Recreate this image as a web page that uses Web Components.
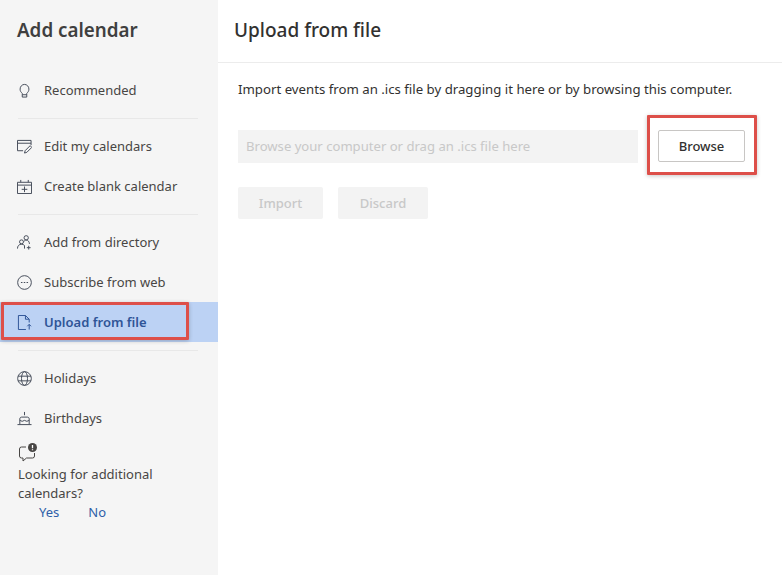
<!DOCTYPE html>
<html lang="en">
<head>
<meta charset="utf-8">
<title>Add calendar</title>
<style>
  html, body { margin: 0; height: 100%; background: #fff; }
  body { font-family: "Noto Sans", "Open Sans", sans-serif; color: #323130; overflow: hidden; }
</style>
</head>
<body>
<cal-dialog>
  <cal-sidebar slot="side" heading="Add calendar">
    <cal-nav-item icon="bulb">Recommended</cal-nav-item>
    <cal-rule></cal-rule>
    <cal-nav-item icon="edit">Edit my calendars</cal-nav-item>
    <cal-nav-item icon="plus">Create blank calendar</cal-nav-item>
    <cal-rule></cal-rule>
    <cal-nav-item icon="people">Add from directory</cal-nav-item>
    <cal-nav-item icon="web">Subscribe from web</cal-nav-item>
    <cal-nav-item icon="file" selected>Upload from file</cal-nav-item>
    <cal-rule></cal-rule>
    <cal-nav-item icon="globe">Holidays</cal-nav-item>
    <cal-nav-item icon="cake">Birthdays</cal-nav-item>
    <cal-feedback></cal-feedback>
  </cal-sidebar>
  <cal-upload-panel heading="Upload from file"></cal-upload-panel>
</cal-dialog>

<script>
// stroke icons on a 16 box, drawn to follow the reference
const ICONS = {
  bulb: '<path d="M5.600 11C4.200 9.900 3.300 8.500 3.300 6.500 3.300 3.700 5.400 1.500 8 1.500s4.700 2.200 4.700 5c0 2-.9 3.400-2.300 4.500v4H5.600z"/><path d="M5.700 12.500h4.600"/>',
  edit: '<path d="M.5 12.500V1.500h14.500v5M.5 4.500h14.500M.5 12.500h6"/><path d="M8 15l.7-2.600 5.300-5.300 1.800 1.800-5.300 5.300z"/>',
  plus: '<path d="M.5 3.500h15v12H.5zM.5 6.500h15M4 1v2.500M12 1v2.500M8 8v6M5 11h6"/>',
  people: '<circle cx="9.800" cy="3" r="2.300"/><circle cx="4.800" cy="7.300" r="2.100"/><path d="M.5 14.500c0-2.800 1.700-4.700 4.300-4.700 1.300 0 2.400.5 3.200 1.400v3.300M7.300 7c.5-1 1.300-1.600 2.500-1.600 2 0 3.300 1.700 3.500 4.100M12.500 11.500v4M10.500 13.500h4"/>',
  web: '<circle cx="8" cy="8" r="7.300"/><path d="M4.200 8h1.600M7.200 8h1.600M10.200 8h1.600" stroke-width="1.300"/>',
  file: '<path d="M1.500.5h7.500l4 4v3.500M9 .5v4h4M1.500.5v15h8"/><path d="M13 15.500V10M11 12l2-2 2 2"/>',
  globe: '<circle cx="8" cy="8" r="7.300"/><ellipse cx="8" cy="8" rx="3.200" ry="7.300"/><path d="M1.200 5.500h13.600M1.200 10.500h13.600"/>',
  cake: '<path d="M8 1v3.500M3 14V8.500C3 7 4 6.500 5 6.500h6c1 0 2 .5 2 2V14M.5 14.500h15M3 10l2.500 1L8 10l2.500 1 2.500-1"/>'
};

class CalDialog extends HTMLElement {
  constructor() {
    super();
    this.attachShadow({ mode: 'open' });
    this.shadowRoot.innerHTML = `
      <style>
        :host { display: flex; width: 100%; height: 100vh; }
      </style>
      <slot name="side"></slot>
      <slot></slot>`;
  }
}

class CalSidebar extends HTMLElement {
  constructor() {
    super();
    this.attachShadow({ mode: 'open' });
    this.shadowRoot.innerHTML = `
      <style>
        :host { display: block; flex: 0 0 218px; background: #f5f5f5; box-sizing: border-box; }
        h1 { margin: 0; padding: 15px 0 0 17px; height: 70px; box-sizing: border-box;
             font-size: 18.8px; line-height: 30px; font-weight: 600; color: #3f3f3f; }
      </style>
      <h1></h1>
      <slot></slot>`;
    this.shadowRoot.querySelector('h1').textContent = this.getAttribute('heading');
  }
}

class CalNavItem extends HTMLElement {
  constructor() {
    super();
    this.attachShadow({ mode: 'open' });
    const name = this.getAttribute('icon');
    this.shadowRoot.innerHTML = `
      <style>
        :host { display: flex; align-items: center; height: 40px; position: relative; box-sizing: border-box;
                padding-left: 17px; gap: 12px; font-size: 13px; color: #484644; }
        svg { width: 15px; height: 15px; flex: none; fill: none; stroke: #454c5a; stroke-width: 1.05; }
        :host([selected]) { background: #bcd2f4; color: #2f5597; font-weight: 600; }
        :host([selected]) svg { stroke: #2f5597; }
        :host([selected])::after { content: ""; position: absolute; left: 1px; top: 0; width: 188px; height: 38px;
                box-sizing: border-box; border: 3px solid #dd4f49; border-radius: 1px; box-shadow: 0 1px 4px rgba(0,0,0,.22); }
      </style>
      <svg viewBox="0 0 16 16" aria-hidden="true">${ICONS[name] || ''}</svg>
      <span><slot></slot></span>`;
  }
}

class CalRule extends HTMLElement {
  constructor() {
    super();
    this.attachShadow({ mode: 'open' });
    this.shadowRoot.innerHTML = `
      <style>
        :host { display: block; height: 1px; margin: 8px 20px 7px 18px; background: #e8e8e8; }
      </style>`;
  }
}

class CalFeedback extends HTMLElement {
  constructor() {
    super();
    this.attachShadow({ mode: 'open' });
    this.shadowRoot.innerHTML = `
      <style>
        :host { display: block; padding: 5px 17px 0 18px; font-size: 13px; line-height: 19px; color: #484644; }
        svg { display: block; width: 20px; height: 20px; margin-bottom: 2px; }
        .links { display: flex; gap: 29px; padding-left: 21px; color: #2f5fa8; }
      </style>
      <svg viewBox="0 0 20 20" aria-hidden="true">
        <path d="M8 4H3.500Q1.500 4 1.500 6v7q0 2 2 2H5v3l3.500-3h6q2 0 2-2v-3" fill="none" stroke="#484644"/>
        <circle cx="14.500" cy="4.500" r="4.500" fill="#484644"/>
        <path d="M14.500 2v3.200M14.500 6.200v1" stroke="#fff" stroke-width="1.300"/>
      </svg>
      <div>Looking for additional calendars?</div>
      <div class="links"><span>Yes</span><span>No</span></div>`;
  }
}

class CalButton extends HTMLElement {
  constructor() {
    super();
    this.attachShadow({ mode: 'open' });
    this.shadowRoot.innerHTML = `
      <style>
        :host { display: inline-flex; align-items: center; justify-content: center; box-sizing: border-box;
                height: 32px; border-radius: 2px; font-size: 13px; font-weight: 500; position: relative;
                background: #f3f3f3; color: #c8c8c8; }
        :host([primary]) { background: #fff; color: #323130; border: 1px solid #c8c6c4; }
        :host([primary])::after { content: ""; position: absolute; left: -12px; top: -16px; width: 110px; height: 60px;
                box-sizing: border-box; border: 3px solid #dd4f49; border-radius: 1px; box-shadow: 0 1px 4px rgba(0,0,0,.22); }
      </style>
      <slot></slot>`;
  }
}

class CalUploadPanel extends HTMLElement {
  constructor() {
    super();
    this.attachShadow({ mode: 'open' });
    this.shadowRoot.innerHTML = `
      <style>
        :host { display: block; flex: 1; min-width: 0; }
        header { height: 63px; box-sizing: border-box; border-bottom: 1px solid #ececec; padding: 15px 0 0 16px; }
        h2 { margin: 0; font-size: 19px; line-height: 30px; font-weight: 500; color: #323130; }
        .body { padding: 0 20px; }
        p { margin: 0; padding-top: 16px; font-size: 13.22px; line-height: 20px; color: #323130; }
        .row { display: flex; gap: 20px; margin-top: 31px; }
        .field { flex: 0 0 400px; height: 33px; box-sizing: border-box; display: flex; align-items: center;
                 padding: 0 0 2px 8px; background: #f3f3f3; color: #c8c8c8; font-size: 13.1px; }
        .actions { display: flex; gap: 15px; margin-top: 24px; }
        .browse { width: 87px; }
        .import { width: 85px; }
        .discard { width: 90px; }
      </style>
      <header><h2></h2></header>
      <div class="body">
        <p>Import events from an .ics file by dragging it here or by browsing this computer.</p>
        <div class="row">
          <div class="field">Browse your computer or drag an .ics file here</div>
          <cal-button class="browse" primary>Browse</cal-button>
        </div>
        <div class="actions">
          <cal-button class="import">Import</cal-button>
          <cal-button class="discard">Discard</cal-button>
        </div>
      </div>`;
    this.shadowRoot.querySelector('h2').textContent = this.getAttribute('heading');
  }
}

customElements.define('cal-dialog', CalDialog);
customElements.define('cal-sidebar', CalSidebar);
customElements.define('cal-nav-item', CalNavItem);
customElements.define('cal-rule', CalRule);
customElements.define('cal-feedback', CalFeedback);
customElements.define('cal-button', CalButton);
customElements.define('cal-upload-panel', CalUploadPanel);
</script>
</body>
</html>
